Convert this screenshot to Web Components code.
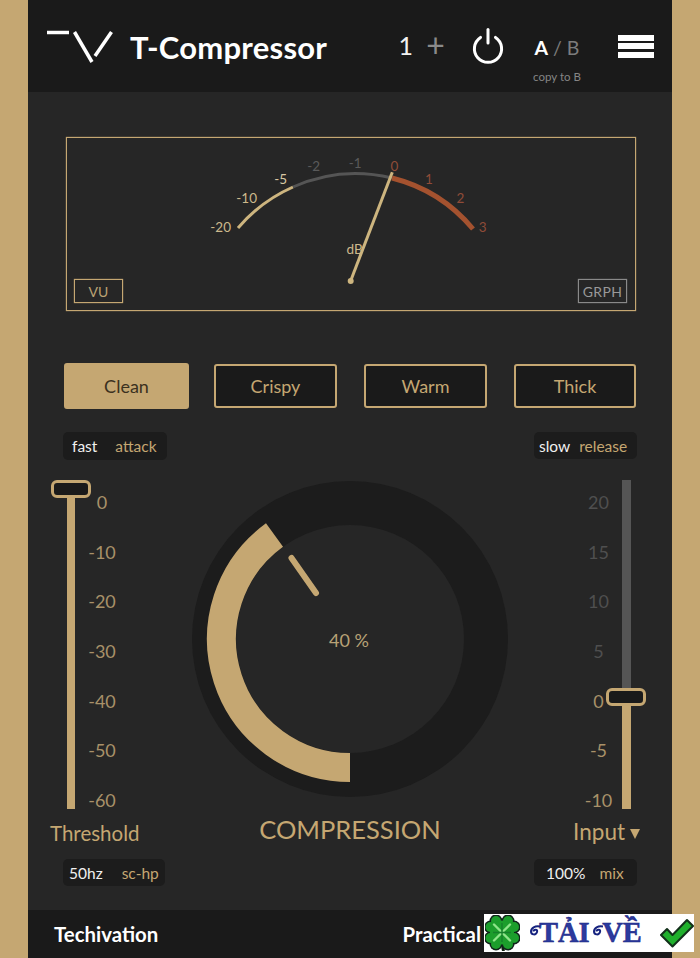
<!DOCTYPE html>
<html lang="en">
<head>
<meta charset="utf-8">
<title>T-Compressor</title>
<style>
html, body { margin: 0; padding: 0; background: #c5a772; }
</style>
</head>
<body>
<tc-app>
  <tc-header slot="header"></tc-header>
  <tc-meter slot="meter"></tc-meter>
  <tc-presets slot="presets">
    <tc-preset active style="--w:125px;--h:46px">Clean</tc-preset>
    <tc-preset style="--w:123px;--ml:25px">Crispy</tc-preset>
    <tc-preset style="--w:123px;--ml:27px">Warm</tc-preset>
    <tc-preset style="--w:122px;--ml:27px">Thick</tc-preset>
  </tc-presets>
  <tc-pill slot="attack" label="attack" style="--w:104px;--h:28px;--pl:9px;--g:18px">fast</tc-pill>
  <tc-pill slot="release" label="release" style="--w:103px;--h:27px;--pl:5px;--g:9px">slow</tc-pill>
  <tc-slider slot="threshold" side="left" ticks="0,-10,-20,-30,-40,-50,-60" handle="0"></tc-slider>
  <tc-knob slot="knob" value="40 %"></tc-knob>
  <tc-slider slot="input" side="right" ticks="20,15,10,5,0,-5,-10" handle="208"></tc-slider>
  <span slot="threshold-label">Threshold</span>
  <span slot="knob-label">COMPRESSION</span>
  <span slot="input-label">Input</span>
  <tc-pill slot="schp" label="sc-hp" style="--w:102px;--h:27px;--pl:6px;--g:19px">50hz</tc-pill>
  <tc-pill slot="mix" label="mix" style="--w:103px;--h:27px;--pl:12px;--g:14px">100%</tc-pill>
  <tc-footer slot="footer"></tc-footer>
  <tc-badge slot="badge"></tc-badge>
</tc-app>

<script>
class TcApp extends HTMLElement {
    constructor() {
        super();
        this.shadowDOM = this.attachShadow({mode: "open"});
        this.shadowDOM.innerHTML = `
        <style>
        * { box-sizing: border-box; }
        :host {
            display: block;
            box-sizing: border-box;
            position: relative;
            width: 700px;
            height: 958px;
            overflow: hidden;
            padding: 0 28px;
            background: #c5a772;
            font-family: Lato, "Liberation Sans", sans-serif;
            color: #c5a772;
        }
        .panel {
            height: 958px;
            background: #262626;
            display: flex;
            flex-direction: column;
        }
        .meter { margin: 45px 36px 0 38px; }
        .presets { margin: 52px 36px 0 36px; }
        .opts {
            display: flex;
            justify-content: space-between;
            margin: 23px 35px 0 35px;
        }
        .controls {
            display: grid;
            grid-template-columns: 164px 316px 164px;
            margin-top: 20px;
            flex: 1;
        }
        .left { padding-left: 23px; display: flex; flex-direction: column; align-items: flex-start; }
        .right { padding-right: 26px; display: flex; flex-direction: column; align-items: flex-end; }
        .mid { display: flex; flex-direction: column; align-items: center; }
        .name {
            font-size: 20.5px;
            line-height: 26px;
            margin-top: 11px;
        }
        .left .name { margin-left: -1px; }
        .right .name {
            font-size: 22.5px;
            margin-top: 10px;
            margin-right: 6px;
            display: flex;
            align-items: center;
            gap: 5px;
        }
        .tri {
            width: 0;
            height: 0;
            border-left: 5.5px solid transparent;
            border-right: 5.5px solid transparent;
            border-top: 10px solid #c5a772;
            margin-top: 3px;
        }
        .big {
            font-size: 25.5px;
            line-height: 32px;
            margin-top: 15px;
        }
        .pill { margin-top: 13px; }
        .left .pill { margin-left: 12px; }
        .right .pill { margin-right: 9px; margin-top: 14px; }
        </style>
        <div class="panel">
            <slot name="header"></slot>
            <div class="meter"><slot name="meter"></slot></div>
            <div class="presets"><slot name="presets"></slot></div>
            <div class="opts"><slot name="attack"></slot><slot name="release"></slot></div>
            <div class="controls">
                <div class="left">
                    <slot name="threshold"></slot>
                    <div class="name"><slot name="threshold-label"></slot></div>
                    <div class="pill"><slot name="schp"></slot></div>
                </div>
                <div class="mid">
                    <slot name="knob"></slot>
                    <div class="big"><slot name="knob-label"></slot></div>
                </div>
                <div class="right">
                    <slot name="input"></slot>
                    <div class="name"><slot name="input-label"></slot><span class="tri"></span></div>
                    <div class="pill"><slot name="mix"></slot></div>
                </div>
            </div>
            <slot name="footer"></slot>
        </div>
        <slot name="badge"></slot>`;
    }
}

class TcHeader extends HTMLElement {
    constructor() {
        super();
        this.shadowDOM = this.attachShadow({mode: "open"});
        this.shadowDOM.innerHTML = `
        <style>
        :host {
            display: flex;
            align-items: center;
            box-sizing: border-box;
            height: 92px;
            flex: none;
            background: #1a1a1a;
            padding: 0 18px;
            color: #fff;
        }
        .logo { display: block; width: 68px; height: 34px; margin-top: 2px; }
        h1 {
            margin: 0 0 0 16px;
            font-size: 31px;
            font-weight: 700;
            line-height: 36px;
            margin-top: 1px;
            letter-spacing: .25px;
            white-space: nowrap;
        }
        .tools { margin-left: auto; display: flex; align-items: center; }
        .num { font-size: 25px; line-height: 30px; margin-top: -2px; color: #f2f2f2; }
        .plus { font-size: 32px; line-height: 30px; margin: -2px 0 0 13px; color: #8a8a8a; width: 19px; text-align: center; }
        .power { display: block; width: 32px; height: 36px; margin: -1px 0 0 27px; }
        .ab { margin-left: 29px; width: 48px; text-align: center; margin-top: 28px; }
        .ab .row { font-size: 19.5px; line-height: 22px; color: #7c7c7c; white-space: nowrap; }
        .ab b { color: #fff; font-weight: 700; }
        .ab .copy { font-size: 11.5px; line-height: 14px; margin-top: 11px; color: #858585; white-space: nowrap; }
        .burger { margin-left: 37px; width: 36px; display: flex; flex-direction: column; gap: 2.5px; margin-top: 0; }
        .burger i { display: block; height: 6px; background: #fff; }
        </style>
        <svg class="logo" viewBox="0 0 68 34" fill="none" stroke="#fff" stroke-width="3.5">
            <path d="M1 2.5H23"/>
            <path d="M28.5 2 46 32"/>
            <path d="M49 26 65.5 2"/>
        </svg>
        <h1>T-Compressor</h1>
        <div class="tools">
            <span class="num">1</span>
            <span class="plus">+</span>
            <svg class="power" viewBox="0 0 32 36" fill="none" stroke="#fff" stroke-width="3" stroke-linecap="round">
                <path d="M8.5 9.4A13.6 13.6 0 1 0 23.5 9.4"/>
                <path d="M16 1.5V15"/>
            </svg>
            <div class="ab">
                <div class="row"><b>A</b> / B</div>
                <div class="copy">copy to B</div>
            </div>
            <div class="burger"><i></i><i></i><i></i></div>
        </div>`;
    }
}

class TcMeter extends HTMLElement {
    constructor() {
        super();
        this.shadowDOM = this.attachShadow({mode: "open"});
        const gold = "#cdb98c", grey = "#5a5a5a", red = "#8f4c38";
        const labels = [
            ["-20", 153.7, 89, gold], ["-10", 179.7, 60, gold], ["-5", 213.7, 41, "#d8c8a4"],
            ["-2", 246.7, 28, grey], ["-1", 288.3, 25, grey], ["0", 327.3, 28, red],
            ["1", 362, 41, red], ["2", 393.3, 60, red], ["3", 415.7, 89, red],
            ["dB", 287.7, 111, gold]
        ];
        const texts = labels.map(l => `<text x="${l[1]}" y="${l[2]}" fill="${l[3]}">${l[0]}</text>`).join("");
        this.shadowDOM.innerHTML = `
        <style>
        * { box-sizing: border-box; }
        :host {
            display: grid;
            box-sizing: border-box;
            width: 570px;
            height: 174px;
            border: 1px solid #c5a772;
            box-shadow: 0 0 1px #c5a772;
        }
        svg { grid-area: 1 / 1; display: block; width: 568px; height: 172px; }
        text {
            font-family: Lato, "Liberation Sans", sans-serif;
            font-size: 13.5px;
            text-anchor: middle;
            dominant-baseline: central;
        }
        .tags {
            grid-area: 1 / 1;
            align-self: end;
            display: flex;
            justify-content: space-between;
            padding: 0 8px 7px 7px;
        }
        .tag {
            width: 49px;
            height: 24px;
            border: 1px solid #c5a772;
            box-shadow: 0 0 1px #c5a772;
            color: #b9a273;
            font-size: 14px;
            line-height: 23px;
            text-align: center;
        }
        .tag.off { border-color: #8a8a8a; box-shadow: 0 0 1px #8a8a8a; color: #999; letter-spacing: .3px; }
        </style>
        <svg viewBox="0 0 568 172" fill="none">
            <path d="M171 90A154 154 0 0 1 226 49" stroke="#cdb57f" stroke-width="3"/>
            <path d="M226 49A154 154 0 0 1 325 40" stroke="#555" stroke-width="3"/>
            <path d="M325 40A154 154 0 0 1 406 91" stroke="#a4522f" stroke-width="5"/>
            ${texts}
            <path d="M283.7 142.7 325.3 34.3" stroke="#cdb57f" stroke-width="3"/>
            <circle cx="283.7" cy="143" r="3" fill="#cdb57f"/>
        </svg>
        <div class="tags"><span class="tag">VU</span><span class="tag off">GRPH</span></div>`;
    }
}

class TcPresets extends HTMLElement {
    constructor() {
        super();
        this.shadowDOM = this.attachShadow({mode: "open"});
        this.shadowDOM.innerHTML = `
        <style>
        :host {
            display: flex;
            align-items: center;
            height: 46px;
        }
        </style>
        <slot></slot>`;
    }
}

class TcPreset extends HTMLElement {
    constructor() {
        super();
        this.shadowDOM = this.attachShadow({mode: "open"});
        this.shadowDOM.innerHTML = `
        <style>
        :host {
            display: flex;
            align-items: center;
            justify-content: center;
            box-sizing: border-box;
            width: var(--w, 123px);
            height: var(--h, 44px);
            margin-left: var(--ml, 0);
            border: 2px solid #c5a772;
            border-radius: 3px;
            background: #1a1a1a;
            color: #c5a772;
            font-size: 18px;
        }
        :host([active]) {
            background: #c5a772;
            color: #3b3120;
        }
        </style>
        <slot></slot>`;
    }
}

class TcPill extends HTMLElement {
    constructor() {
        super();
        this.shadowDOM = this.attachShadow({mode: "open"});
        this.shadowDOM.innerHTML = `
        <style>
        :host {
            display: flex;
            align-items: center;
            box-sizing: border-box;
            width: var(--w);
            height: var(--h);
            padding-left: var(--pl);
            gap: var(--g);
            border-radius: 5px;
            background: #1c1c1c;
            color: #f0f0f0;
            font-size: 15.5px;
            white-space: nowrap;
        }
        span { color: #c5a772; }
        </style>
        <slot></slot><span>${this.getAttribute("label")}</span>`;
    }
}

class TcSlider extends HTMLElement {
    constructor() {
        super();
        this.shadowDOM = this.attachShadow({mode: "open"});
        const side = this.getAttribute("side");
        const ticks = this.getAttribute("ticks").split(",");
        const handle = Number(this.getAttribute("handle"));
        const tickHtml = ticks.map((t, i) => {
            const dim = side === "right" && i < 4 ? " dim" : "";
            return `<span class="${dim}">${t}</span>`;
        }).join("");
        const rail = handle > 0 ? `<i class="off" style="height:${handle}px"></i>` : "";
        this.shadowDOM.innerHTML = `
        <style>
        :host {
            display: flex;
            height: 329px;
            font-size: 18px;
            color: #a89169;
        }
        :host([side="right"]) { flex-direction: row-reverse; }
        .rail {
            position: relative;
            width: 36px;
            display: flex;
            flex-direction: column;
            padding-left: 16px;
            box-sizing: border-box;
        }
        :host([side="right"]) .rail {
            width: 32.5px;
            padding-left: 8.5px;
        }
        .rail i { display: block; width: 8px; }
        :host([side="right"]) .rail i { width: 9px; }
        .rail .off { background: #555; flex: none; }
        .rail .on { background: #c5a772; flex: 1; }
        .knob {
            position: absolute;
            left: 0;
            top: ${handle}px;
            width: 40px;
            height: 18px;
            box-sizing: border-box;
            border: 3px solid #c5a772;
            border-radius: 6px;
            background: #1a1a1a;
        }
        :host([side="right"]) .knob { left: -7.5px; }
        .ticks {
            width: 30px;
            display: flex;
            flex-direction: column;
            justify-content: space-between;
            align-items: center;
            padding-top: 12px;
            margin-bottom: -1px;
            line-height: 20px;
        }
        .dim { color: #4f4f4f; }
        </style>
        <div class="rail">${rail}<i class="on"></i><div class="knob"></div></div>
        <div class="ticks">${tickHtml}</div>`;
    }
}

class TcKnob extends HTMLElement {
    constructor() {
        super();
        this.shadowDOM = this.attachShadow({mode: "open"});
        this.shadowDOM.innerHTML = `
        <style>
        :host { display: block; width: 316px; height: 318px; }
        svg { display: block; }
        text {
            font-family: Lato, "Liberation Sans", sans-serif;
            font-size: 18px;
            fill: #b8a276;
            text-anchor: middle;
            dominant-baseline: central;
        }
        </style>
        <svg width="316" height="318" viewBox="0 0 316 318" fill="none">
            <circle cx="158" cy="159" r="158" fill="#1c1c1c"/>
            <circle cx="158" cy="159" r="114" fill="#262626"/>
            <path d="M158 287.5A128.5 128.5 0 0 1 82.5 55" stroke="#c5a772" stroke-width="29"/>
            <path d="M99.5 78 124 113" stroke="#c5a772" stroke-width="6" stroke-linecap="round"/>
            <text x="157" y="160">${this.getAttribute("value")}</text>
        </svg>`;
    }
}

class TcFooter extends HTMLElement {
    constructor() {
        super();
        this.shadowDOM = this.attachShadow({mode: "open"});
        this.shadowDOM.innerHTML = `
        <style>
        :host {
            display: flex;
            justify-content: space-between;
            align-items: center;
            box-sizing: border-box;
            flex: none;
            height: 48px;
            padding: 0 191px 0 26px;
            background: #1a1a1a;
            color: #fff;
            font-size: 20.4px;
            font-weight: 700;
        }
        </style>
        <span>Techivation</span><span>Practical</span>`;
    }
}

class TcBadge extends HTMLElement {
    constructor() {
        super();
        this.shadowDOM = this.attachShadow({mode: "open"});
        const lobes = [[11, 6], [23, 6], [29, 12], [29, 23], [23, 29], [11, 29], [5.5, 23], [5.5, 12]];
        const dots = (r, c) => lobes.map(p => `<circle cx="${p[0]}" cy="${p[1]}" r="${r}" fill="${c}"/>`).join("");
        const curl = left => `<svg class="curl" style="left:${left}px" viewBox="0 0 11 11" fill="none"><path d="M10 1.5C5 .5 1 3 1 6.5S6 10.5 7 7 3.5 4.5 3.5 6.5" stroke="#15227e" stroke-width="2"/></svg>`;
        this.shadowDOM.innerHTML = `
        <style>
        :host {
            position: absolute;
            left: 484px;
            top: 914px;
            width: 210px;
            height: 38px;
            display: flex;
            align-items: center;
            background: #fff;
        }
        .clover { display: block; width: 35px; height: 36px; margin-left: 1px; flex: none; }
        .word {
            position: relative;
            margin-left: 9px;
            width: 115px;
            flex: none;
            padding-left: 10px;
            box-sizing: border-box;
            font-family: "Liberation Serif", serif;
            font-size: 28.5px;
            font-weight: 700;
            line-height: 36px;
            color: #2c3a9e;
            -webkit-text-stroke: .5px #15227e;
            white-space: nowrap;
            word-spacing: 6px;
        }
        .curl { position: absolute; top: 10px; width: 11px; height: 11px; }
        .check { display: block; width: 35px; height: 30px; margin-left: 15px; flex: none; }
        </style>
        <svg class="clover" viewBox="0 0 35 36">
            <path d="M17 28 18.5 36" stroke="#102012" stroke-width="3"/>
            ${dots(6.5, "#10241a")}
            <circle cx="17" cy="17.5" r="13" fill="#10241a"/>
            ${dots(5, "#1c9e2c")}
            <circle cx="17" cy="17.5" r="12" fill="#1c9e2c"/>
            <path d="M17 17.5 9 9.5M17 17.5 25 9.5M17 17.5 9 25.5M17 17.5 25 25.5" stroke="#8fe58a" stroke-width="2.4" stroke-linecap="round"/>
            <path d="M17 8V27M8 17.5H26" stroke="#14802a" stroke-width="1.4"/>
        </svg>
        <span class="word">TẢI VỀ${curl(1)}${curl(64)}</span>
        <svg class="check" viewBox="0 0 35 30">
            <path d="M2 17 8 11 13.5 17 28 2 34 8 13.5 28.5Z" fill="#1fb02c" stroke="#12301a" stroke-width="2" stroke-linejoin="round"/>
        </svg>`;
    }
}

customElements.define("tc-app", TcApp);
customElements.define("tc-header", TcHeader);
customElements.define("tc-meter", TcMeter);
customElements.define("tc-presets", TcPresets);
customElements.define("tc-preset", TcPreset);
customElements.define("tc-pill", TcPill);
customElements.define("tc-slider", TcSlider);
customElements.define("tc-knob", TcKnob);
customElements.define("tc-footer", TcFooter);
customElements.define("tc-badge", TcBadge);
</script>
</body>
</html>
